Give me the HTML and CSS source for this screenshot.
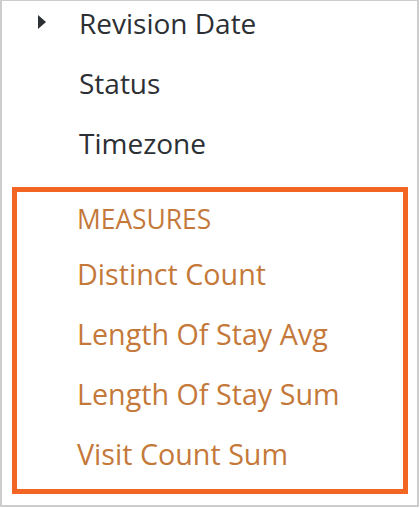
FILE: index.html
```html
<!DOCTYPE html>
<html lang="en">
<head>
<meta charset="utf-8">
<title>Fields</title>
<link rel="stylesheet" href="styles.css">
</head>
<body>
<div class="panel">
  <ul class="fields">
    <li class="field">
      <span class="caret"></span>
      <span class="label">Revision Date</span>
    </li>
    <li class="field"><span class="label">Status</span></li>
    <li class="field"><span class="label">Timezone</span></li>
  </ul>
  <div class="measures">
    <div class="heading">MEASURES</div>
    <ul class="measure-list">
      <li class="measure">Distinct Count</li>
      <li class="measure">Length Of Stay Avg</li>
      <li class="measure">Length Of Stay Sum</li>
      <li class="measure">Visit Count Sum</li>
    </ul>
  </div>
</div>
</body>
</html>
```
FILE: styles.css
```css
* { box-sizing: border-box; }
html, body { margin: 0; padding: 0; background: #ffffff; }
body {
  font-family: "Open Sans", "Liberation Sans", sans-serif;
  width: 420px;
  height: 508px;
  overflow: hidden;
}
.panel {
  width: 419px;
  height: 507px;
  border: 2px solid #cdcdcd;
  border-top-width: 1px;
  background: #fff;
  overflow: hidden;
}
ul { list-style: none; margin: 0; padding: 0; }
.fields { margin-top: -8px; }
.field {
  position: relative;
  height: 60px;
  line-height: 60px;
  padding-left: 77px;
  font-size: 28px;
  color: #2c3034;
}
.caret {
  position: absolute;
  left: 36px;
  top: 22px;
  width: 0;
  height: 0;
  border-top: 7px solid transparent;
  border-bottom: 7px solid transparent;
  border-left: 8px solid #2c3034;
}
.measures {
  margin: 14px 9px 0 10px;
  height: 307px;
  border: 5px solid #f26522;
  padding: 7px 0 0 60px;
  color: #c4793a;
}
.heading {
  font-size: 26.4px;
  line-height: 40px;
}
.measure {
  font-size: 28.7px;
  height: 60px;
  line-height: 60px;
}
.measure:first-child { margin-top: 5px; }
```
